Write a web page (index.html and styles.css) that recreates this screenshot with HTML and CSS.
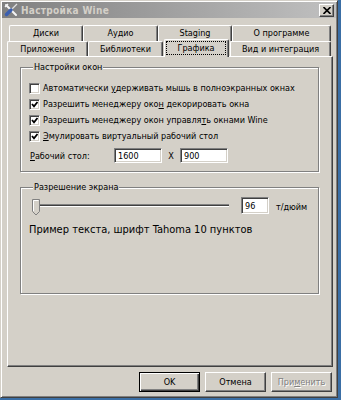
FILE: index.html
```html
<!DOCTYPE html>
<html lang="ru">
<head>
  <meta charset="UTF-8">
  <title>Настройка Wine</title>
  <link rel="stylesheet" href="styles.css">
</head>
<body>

  <div class="window">
    <div class="titlebar">
      <svg class="app-icon" width="16" height="16" viewBox="0 0 16 16">
        <path d="M3 3 L13 13" stroke="#f4f4f4" stroke-width="2" stroke-linecap="round"/>
        <path d="M2 5 L5 2" stroke="#f4f4f4" stroke-width="1.5"/>
        <path d="M14 2 L8 8" stroke="#e0e0e0" stroke-width="1.2"/>
        <path d="M8 8 L3.5 12.5" stroke="#3b5fb0" stroke-width="3.5" stroke-linecap="round"/>
      </svg>
      <span class="title">Настройка Wine</span>
      <span class="close">
        <svg width="8" height="7" viewBox="0 0 8 7">
          <path d="M0.5 0 L7.5 7 M7.5 0 L0.5 7" stroke="#000" stroke-width="1.6"/>
        </svg>
      </span>
    </div>

    <div class="tabs">
      <div class="tab-row back">
        <div class="tab w-disks">Диски</div>
        <div class="tab w-audio">Аудио</div>
        <div class="tab w-staging">Staging</div>
        <div class="tab w-about">О программе</div>
      </div>
      <div class="tab-row front">
        <div class="tab w-apps">Приложения</div>
        <div class="tab w-libs">Библиотеки</div>
        <div class="tab w-graph selected"><span class="focus">Графика</span></div>
        <div class="tab w-desk">Вид и интеграция</div>
      </div>
    </div>

    <div class="panel">
      <fieldset class="group windows">
        <legend>Настройки окон</legend>

        <div class="check"><span class="box"></span><span>Автоматически <u>у</u>держивать мышь в полноэкранных окнах</span></div>
        <div class="check"><span class="box on"></span><span>Разрешить менеджеру око<u>н</u> декорировать окна</span></div>
        <div class="check"><span class="box on"></span><span>Разрешить менеджеру окон управля<u>т</u>ь окнами Wine</span></div>
        <div class="check"><span class="box on"></span><span><u>Э</u>мулировать виртуальный рабочий стол</span></div>

        <div class="desk-row">
          <span class="desk-label"><u>Р</u>абочий стол:</span>
          <input class="field size" type="text" value="1600">
          <span class="times">X</span>
          <input class="field size" type="text" value="900">
        </div>
      </fieldset>

      <fieldset class="group dpi">
        <legend>Разрешение экрана</legend>

        <div class="dpi-row">
          <svg class="slider" width="197" height="17" viewBox="0 0 197 17">
            <rect x="7" y="5" width="190" height="1" fill="#808080"/>
            <rect x="7" y="6" width="190" height="1" fill="#404040"/>
            <rect x="7" y="7" width="190" height="1" fill="#ffffff"/>
            <path d="M0.5 0.5 H7.5 V12.5 L4 16 L0.5 12.5 Z" fill="#d4d0c8" stroke="#808080"/>
            <path d="M1.5 12 V1.5 H6.5" fill="none" stroke="#ffffff"/>
          </svg>
          <input class="field dpi-value" type="text" value="96">
          <span class="unit">т/дюйм</span>
        </div>

        <p class="sample">Пример текста, шрифт Tahoma 10 пунктов</p>
      </fieldset>
    </div>

    <div class="buttons">
      <button class="default">OK</button>
      <button>Отмена</button>
      <button class="disabled">При<u>м</u>енить</button>
    </div>
  </div>

</body>
</html>
```

FILE: styles.css
```css
* { box-sizing: border-box; }

body {
  margin: 0;
  background: #3a6ea5;
  font-family: 'DejaVu Sans Condensed', 'DejaVu Sans', sans-serif;
  font-stretch: condensed;
  font-size: 9px;
  color: #000;
}

.window {
  width: 338px;
  height: 398px;
  padding: 1px;
  background: #d4d0c8;
  border: 1px solid;
  border-color: #d4d0c8 #404040 #404040 #d4d0c8;
  box-shadow: inset 1px 1px 0 #fff, inset -1px -1px 0 #808080;
  display: flex;
  flex-direction: column;
}

/* title bar */

.titlebar {
  height: 16px;
  flex: none;
  display: flex;
  align-items: center;
  padding: 0 2px 0 1px;
  background: linear-gradient(to right, #808080, #c0c0c0);
}

.app-icon {
  flex: none;
  margin-right: 2px;
}

.title {
  flex: 1;
  color: #d4d0c8;
  font-size: 10px;
  font-weight: bold;
  letter-spacing: 0.3px;
}

.close {
  width: 15px;
  height: 13px;
  display: flex;
  align-items: center;
  justify-content: center;
  background: #d4d0c8;
  border: 1px solid;
  border-color: #fff #404040 #404040 #fff;
  box-shadow: inset -1px -1px 0 #808080;
}

/* tabs */

.tabs {
  margin-top: 7px;
  padding-left: 5px;
  flex: none;
}

.tab-row {
  display: flex;
}

.tab-row.back {
  height: 16px;
  padding-left: 2px;
}

.tab-row.front {
  height: 15px;
}

.tab {
  flex: none;
  display: flex;
  align-items: center;
  justify-content: center;
  white-space: nowrap;
  border-top: 1px solid #fff;
  border-left: 1px solid #fff;
  border-right: 1px solid #404040;
  border-radius: 2px 2px 0 0;
  box-shadow: inset -1px 0 0 #808080;
  padding-bottom: 1px;
}

.w-disks { width: 74px; }
.w-audio { width: 75px; }
.w-staging { width: 74px; }
.w-about { width: 99px; }
.w-apps { width: 81px; }
.w-libs { width: 75px; }
.w-graph { width: 65px; margin: 0 1px; }
.w-desk { width: 101px; }

.tab.selected {
  position: relative;
  z-index: 1;
  height: 18px;
  margin-top: -2px;
  background: #d4d0c8;
  padding: 1px 2px 2px 1px;
  align-items: stretch;
}

.focus {
  flex: 1;
  display: flex;
  align-items: center;
  justify-content: center;
  border: 1px dotted #000;
}

/* panel */

.panel {
  flex: 1;
  border: 1px solid;
  border-color: #fff #404040 #404040 #fff;
  box-shadow: inset -1px -1px 0 #808080;
  margin: 0 3px 0 5px;
  padding: 4px 13px 0 12px;
}

.group {
  margin: 0;
  border: 1px solid #808080;
  box-shadow: inset 1px 1px 0 #fff, 1px 1px 0 #fff;
}

.group legend {
  margin-left: 4px;
  padding: 0 1px;
  line-height: 12px;
  background: #d4d0c8;
}

.windows {
  padding: 7px 8px 7px 8px;
}

.dpi {
  margin-top: 9px;
  height: 113px;
  padding: 4px 8px 0 8px;
}

.check {
  height: 16px;
  display: flex;
  align-items: center;
  white-space: nowrap;
}

.box {
  width: 11px;
  height: 11px;
  margin-right: 3px;
  flex: none;
  background: #fff;
  border: 1px solid;
  border-color: #808080 #fff #fff #808080;
  box-shadow: inset 1px 1px 0 #404040, inset -1px -1px 0 #d4d0c8;
}

.box.on {
  background: #fff url("data:image/svg+xml,%3Csvg xmlns='http://www.w3.org/2000/svg' width='9' height='9'%3E%3Cpath d='M2 4 L4 6.3 L7.5 2' fill='none' stroke='black' stroke-width='1.8'/%3E%3C/svg%3E") center no-repeat;
}

.desk-row {
  display: flex;
  align-items: center;
  height: 17px;
  margin-top: 3px;
  padding-left: 1px;
}

.desk-label {
  width: 84px;
}

.field {
  height: 15px;
  padding: 0 0 0 3px;
  margin: 0;
  font-family: inherit;
  font-stretch: inherit;
  font-size: 9px;
  background: #fff;
  border: 1px solid;
  border-color: #808080 #fff #fff #808080;
  box-shadow: inset 1px 1px 0 #404040, inset -1px -1px 0 #d4d0c8;
  outline: none;
}

.size {
  width: 48px;
}

.times {
  width: 18px;
  text-align: center;
}

.dpi-row {
  display: flex;
  align-items: center;
  height: 19px;
}

.slider {
  flex: none;
  margin-left: 3px;
  margin-top: 2px;
}

.dpi-value {
  flex: none;
  width: 28px;
  height: 17px;
  margin-left: 12px;
  margin-top: -2px;
}

.unit {
  margin-left: 7px;
  white-space: nowrap;
}

.sample {
  margin: 7px 0 0;
  font-size: 11px;
}

/* buttons */

.buttons {
  flex: none;
  display: flex;
  justify-content: flex-end;
  gap: 5px;
  margin: 5px 4px 4px 0;
}

button {
  width: 61px;
  height: 20px;
  padding: 0;
  font-family: inherit;
  font-stretch: inherit;
  font-size: 9px;
  color: #000;
  background: #d4d0c8;
  border: 1px solid;
  border-color: #fff #404040 #404040 #fff;
  box-shadow: inset -1px -1px 0 #808080;
}

button.default {
  border-color: #000;
  box-shadow: inset 1px 1px 0 #fff, inset -1px -1px 0 #404040, inset -2px -2px 0 #808080;
}

button.disabled {
  color: #808080;
  text-shadow: 1px 1px 0 #fff;
}
```
